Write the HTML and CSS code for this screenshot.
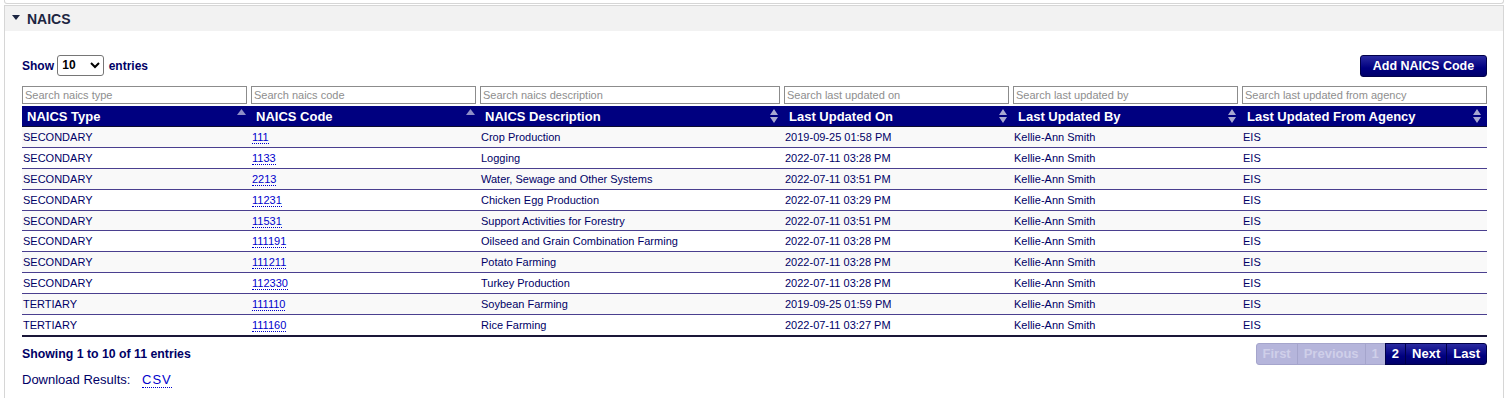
FILE: index.html
```html
<!DOCTYPE html>
<html lang="en">
<head>
    <meta charset="UTF-8">
    <title>NAICS</title>
    <link rel="stylesheet" href="styles.css">
</head>
<body>
    <div class="prev-panel"></div>

    <div class="panel">
        <div class="panel-head"><span class="caret"></span>NAICS</div>

        <div class="panel-body">
            <div class="toolbar">
                <label class="length">Show
                    <select><option>10</option><option>25</option><option>50</option></select>
                    entries</label>
                <button class="btn-add">Add NAICS Code</button>
            </div>

            <table class="grid">
                <colgroup>
                    <col class="c-type"><col class="c-code"><col class="c-desc">
                    <col class="c-on"><col class="c-by"><col>
                </colgroup>
                <thead>
                    <tr class="filters">
                        <td><input placeholder="Search naics type"></td>
                        <td><input placeholder="Search naics code"></td>
                        <td><input placeholder="Search naics description"></td>
                        <td><input placeholder="Search last updated on"></td>
                        <td><input placeholder="Search last updated by"></td>
                        <td><input placeholder="Search last updated from agency"></td>
                    </tr>
                    <tr class="heads">
                        <th class="sort-asc">NAICS Type</th>
                        <th class="sort-asc">NAICS Code</th>
                        <th class="sort">NAICS Description</th>
                        <th class="sort">Last Updated On</th>
                        <th class="sort">Last Updated By</th>
                        <th class="sort">Last Updated From Agency</th>
                    </tr>
                </thead>
                <tbody>
                    <tr><td>SECONDARY</td><td><a href="#">111</a></td><td>Crop Production</td><td>2019-09-25 01:58 PM</td><td>Kellie-Ann Smith</td><td>EIS</td></tr>
                    <tr><td>SECONDARY</td><td><a href="#">1133</a></td><td>Logging</td><td>2022-07-11 03:28 PM</td><td>Kellie-Ann Smith</td><td>EIS</td></tr>
                    <tr><td>SECONDARY</td><td><a href="#">2213</a></td><td>Water, Sewage and Other Systems</td><td>2022-07-11 03:51 PM</td><td>Kellie-Ann Smith</td><td>EIS</td></tr>
                    <tr><td>SECONDARY</td><td><a href="#">11231</a></td><td>Chicken Egg Production</td><td>2022-07-11 03:29 PM</td><td>Kellie-Ann Smith</td><td>EIS</td></tr>
                    <tr><td>SECONDARY</td><td><a href="#">11531</a></td><td>Support Activities for Forestry</td><td>2022-07-11 03:51 PM</td><td>Kellie-Ann Smith</td><td>EIS</td></tr>
                    <tr><td>SECONDARY</td><td><a href="#">111191</a></td><td>Oilseed and Grain Combination Farming</td><td>2022-07-11 03:28 PM</td><td>Kellie-Ann Smith</td><td>EIS</td></tr>
                    <tr><td>SECONDARY</td><td><a href="#">111211</a></td><td>Potato Farming</td><td>2022-07-11 03:28 PM</td><td>Kellie-Ann Smith</td><td>EIS</td></tr>
                    <tr><td>SECONDARY</td><td><a href="#">112330</a></td><td>Turkey Production</td><td>2022-07-11 03:28 PM</td><td>Kellie-Ann Smith</td><td>EIS</td></tr>
                    <tr><td>TERTIARY</td><td><a href="#">111110</a></td><td>Soybean Farming</td><td>2019-09-25 01:59 PM</td><td>Kellie-Ann Smith</td><td>EIS</td></tr>
                    <tr><td>TERTIARY</td><td><a href="#">111160</a></td><td>Rice Farming</td><td>2022-07-11 03:27 PM</td><td>Kellie-Ann Smith</td><td>EIS</td></tr>
                </tbody>
            </table>

            <div class="footer-bar">
                <div class="info">Showing 1 to 10 of 11 entries</div>
                <div class="paging">
                    <a class="off">First</a><a class="off">Previous</a><a class="off">1</a><a class="on">2</a><a class="on">Next</a><a class="on">Last</a>
                </div>
            </div>
            <div class="download">Download Results: <a href="#">CSV</a></div>
        </div>
    </div>
</body>
</html>
```

FILE: styles.css
```css
body { margin: 0; background: #fff; font-family: "Liberation Sans", Arial, sans-serif; color: #000066; }

.prev-panel { height: 3px; margin: 0 1px 0 4px; border: 1px solid #d6d6d6; border-top: none; border-radius: 0 0 3px 3px; }

.panel { margin: 1px 1px 0 4px; border: 1px solid #d6d6d6; border-bottom: none; height: 400px; }
.panel-head { background: #f2f2f2; height: 25px; line-height: 27px; padding-left: 7px; font-size: 14px; font-weight: bold; color: #1c2541; }
.panel-head .caret { display: inline-block; width: 0; height: 0; border-left: 4px solid transparent; border-right: 4px solid transparent; border-top: 5px solid #1c2541; vertical-align: 4px; margin-right: 7px; }

.panel-body { padding: 0 16px 0 17px; }

.toolbar { display: flex; justify-content: space-between; align-items: center; height: 46px; }
.toolbar .length { font-size: 12px; font-weight: bold; color: #000066; margin-top: 22px; }
.toolbar select { font-family: inherit; font-size: 12px; font-weight: bold; color: #000; width: 47px; height: 21px; margin: 0 1px 0 0; border: 1px solid #767676; border-radius: 3px; background: #fff; }
.btn-add { margin-top: 24px; width: 127px; height: 22px; border: 1px solid #00004a; border-radius: 3px; background: linear-gradient(#2a2aa0, #000080 60%, #00006b); color: #fff; font-family: inherit; font-size: 12.5px; font-weight: bold; padding: 0; }

.grid { width: 100%; border-collapse: collapse; table-layout: fixed; font-size: 11px; margin-top: 9px; }
.grid .c-type { width: 229px; }
.grid .c-code { width: 229px; }
.grid .c-desc { width: 304px; }
.grid .c-on { width: 229px; }
.grid .c-by { width: 229px; }
.grid td { padding: 0 0 0 1px; }
.grid .filters td { padding: 0 4px 2px 0; height: 18px; }
.grid .filters input { box-sizing: border-box; width: 100%; height: 18px; margin: 0; padding: 0 2px; border: 1px solid #8c8c8c; font-family: inherit; font-size: 11px; color: #000; }
.grid .filters td:last-child { padding-right: 0; }
.grid .filters input::placeholder { color: #8e8e8e; }

.grid .heads th { background: #000080; color: #fff; text-align: left; font-size: 13px; height: 20px; padding: 0 0 0 5px; position: relative; border-bottom: 1px solid #0b0b30; }
.grid .heads th::after { position: absolute; right: 4px; top: 3px; color: #8f8fc8; }
.grid .heads th.sort-asc::after { content: ""; width: 9px; height: 6px; top: 3px; right: 5px; background: #8f8fc8; clip-path: polygon(50% 0, 100% 100%, 0 100%); }
.grid .heads th.sort::after { content: ""; width: 8px; height: 14px; top: 3px; right: 6px; background: #a8a8d0; clip-path: polygon(50% 0, 100% 42%, 0 42%, 0 58%, 100% 58%, 50% 100%, 0 58%, 0 42%); }

.grid tbody td { height: 19.9px; border-bottom: 1px solid #4a3f8f; color: #000066; white-space: nowrap; }
.grid tbody tr:nth-child(odd) td { background: #f9f9f9; }
.grid tbody tr:last-child td { border-bottom: 2px solid #1a1638; }
.grid a { color: #0000cc; text-decoration: none; border-bottom: 1px dotted #0000cc; }

.footer-bar { display: flex; justify-content: space-between; align-items: flex-start; margin-top: 6px; }
.info { font-size: 12.3px; font-weight: bold; color: #000066; margin-top: 4px; }
.paging { display: flex; }
.paging a { font-size: 13px; font-weight: bold; height: 20px; line-height: 20px; padding: 0 6px; border: 1px solid #00004a; color: #fff; background: linear-gradient(#2a2aa0, #000080 60%, #00006b); margin-left: -1px; }
.paging a:first-child { border-radius: 3px 0 0 3px; }
.paging a:last-child { border-radius: 0 3px 3px 0; }
.paging a.off { background: #b5b5db; color: #cfcfe9; border-color: #a5a5cc; }

.download { font-size: 13px; color: #000066; margin-top: 7px; }
.download a { color: #0000cc; text-decoration: none; border-bottom: 1px dotted #0000cc; margin-left: 8px; letter-spacing: 1px; }
```
